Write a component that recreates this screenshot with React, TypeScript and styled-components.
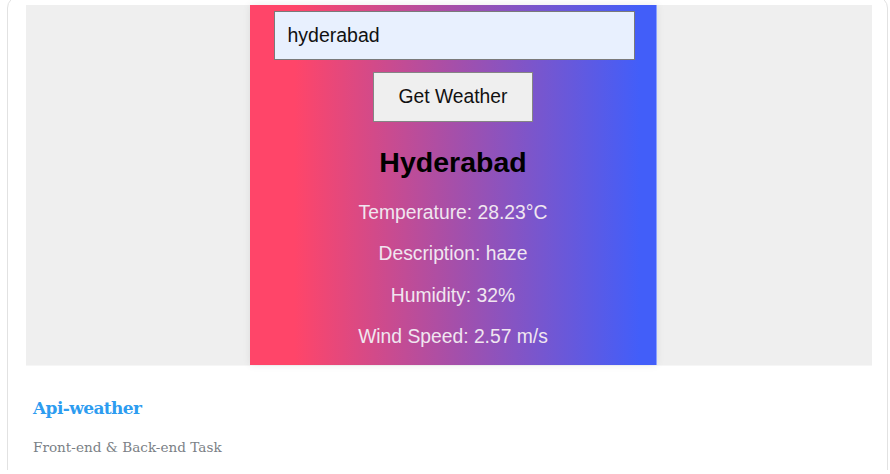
import * as React from 'react';
import styled, { createGlobalStyle } from 'styled-components';

const GlobalStyle = createGlobalStyle`
    html, body {
        margin: 0;
        padding: 0;
        background: #ffffff;
        overflow: hidden;
    }
`;

const weather = {
    city: 'Hyderabad',
    query: 'hyderabad',
    lines: ['Temperature: 28.23°C', 'Description: haze', 'Humidity: 32%', 'Wind Speed: 2.57 m/s'],
};

const App: React.FC = () => (
    <>
        <GlobalStyle />
        <Page>
            <Card>
                <Preview>
                    <WeatherPanel>
                        <CityInput defaultValue={weather.query} />
                        <FetchButton type="button">Get Weather</FetchButton>
                        <CityName>{weather.city}</CityName>
                        {weather.lines.map((line) => (
                            <InfoLine key={line}>{line}</InfoLine>
                        ))}
                    </WeatherPanel>
                </Preview>
                <CardBody>
                    <ProjectTitle>Api-weather</ProjectTitle>
                    <ProjectTag>Front-end &amp; Back-end Task</ProjectTag>
                </CardBody>
            </Card>
        </Page>
    </>
);

const Page = styled.div`
    padding: 0 2px 0 7px;
    height: 474px;
    box-sizing: border-box;
`;

const Card = styled.div`
    margin-top: -4px;
    height: 500px;
    border: 1px solid #e2e2e2;
    border-radius: 12px;
    padding: 8px 15px 0 18px;
    box-sizing: border-box;
    background: #fff;
`;

const Preview = styled.div`
    height: 360px;
    background: #efefef;
    border-bottom: 1px solid #f6f6f6;
    display: flex;
    justify-content: center;
    padding-left: 9px;
`;

const WeatherPanel = styled.div`
    width: 407px;
    height: 100%;
    overflow: hidden;
    box-sizing: border-box;
    background: linear-gradient(to right, #ff4569 11%, #a64fa9 50%, #425ef9 96%);
    box-shadow: 0 0 8px rgba(0, 0, 0, 0.08);
    border-right: 1px solid #8aa0ff;
    display: flex;
    flex-direction: column;
    align-items: center;
    padding-top: 6px;
    font-family: 'Liberation Sans', Arial, sans-serif;

    & > * {
        flex-shrink: 0;
    }
`;

const CityInput = styled.input`
    width: 361px;
    height: 49px;
    box-sizing: border-box;
    margin-left: 2px;
    padding: 0 13px;
    font-family: 'Liberation Sans', Arial, sans-serif;
    font-size: 19.5px;
    color: #111;
    background: #e8f0fe;
    border: 1px solid #7a7a7a;
    outline: none;
`;

const FetchButton = styled.button`
    margin-top: 12px;
    width: 160px;
    height: 50px;
    font-family: 'Liberation Sans', Arial, sans-serif;
    font-size: 19.3px;
    color: #111;
    background: #efefef;
    border: 1px solid #858585;
`;

const CityName = styled.h2`
    margin: 24px 0 24px;
    font-size: 28.5px;
    font-weight: bold;
    color: #000;
    line-height: 32px;
`;

const InfoLine = styled.p`
    margin: 0 0 19.3px;
    font-size: 19.3px;
    line-height: 22px;
    color: #f0e6f0;
`;

const CardBody = styled.div`
    padding: 30px 8px 0 7px;
`;

const ProjectTitle = styled.h3`
    margin: 0;
    font-family: 'DejaVu Serif', 'Liberation Serif', serif;
    font-size: 17px;
    font-weight: bold;
    line-height: 24px;
    color: #2d9cf0;
    letter-spacing: -0.6px;
`;

const ProjectTag = styled.p`
    margin: 17px 0 0;
    font-family: 'DejaVu Serif', 'Liberation Serif', serif;
    font-size: 13.6px;
    line-height: 20px;
    color: #7b7f86;
`;

export default App;
